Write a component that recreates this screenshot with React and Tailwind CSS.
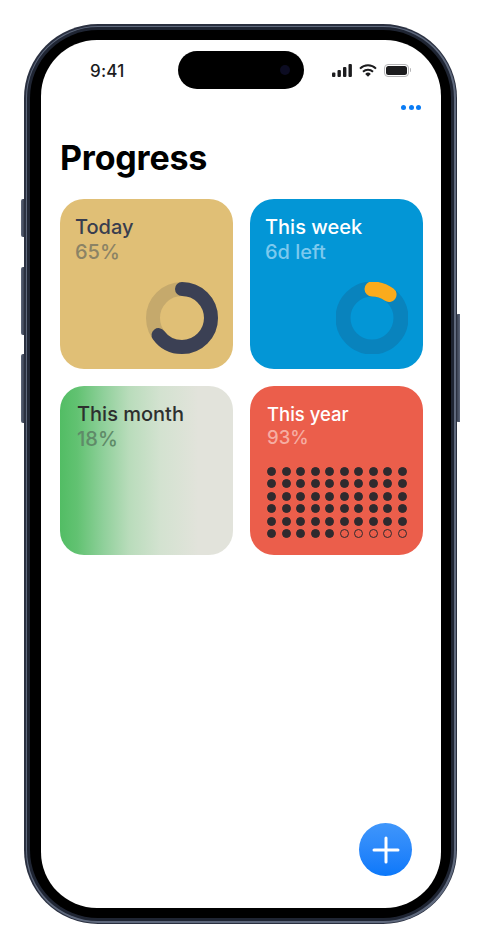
const font = { fontFamily: 'Inter, "Liberation Sans", sans-serif' };

function SideButton({ className }) {
  return <div className={`absolute w-[4px] bg-gradient-to-r from-[#5d667a] to-[#2e3545] ${className}`} />;
}

function StatusIcons() {
  return (
    <div className="flex items-center gap-[7px]">
      <svg width="20" height="13" viewBox="0 0 20 13" fill="#1c1c1e">
        <rect x="0" y="8.5" width="3.4" height="4.5" rx="1" />
        <rect x="5.5" y="6" width="3.4" height="7" rx="1" />
        <rect x="11" y="3" width="3.4" height="10" rx="1" />
        <rect x="16.5" y="0" width="3.4" height="13" rx="1" />
      </svg>
      <svg width="18" height="13" viewBox="0 0 18 13" fill="none" stroke="#1c1c1e" strokeWidth="2">
        <path d="M1 4.6 A11.5 11.5 0 0 1 17 4.6" />
        <path d="M4 7.7 A7.3 7.3 0 0 1 14 7.7" />
        <path d="M9 12.8 L6.2 9.9 A4 4 0 0 1 11.8 9.9 Z" fill="#1c1c1e" stroke="none" />
      </svg>
      <div className="flex items-center gap-[1px]">
        <div className="w-[25px] h-[13px] rounded-[4px] border border-[#b5b5b7] p-[1px]">
          <div className="w-full h-full rounded-[2.5px] bg-[#1c1c1e]" />
        </div>
        <div className="w-[1px] h-[4px] rounded-r-sm bg-[#b5b5b7]" />
      </div>
    </div>
  );
}

function Ring({ track, color, value, width = 14 }) {
  return (
    <svg width="72" height="72" viewBox="0 0 72 72" className="mt-auto self-end mr-[15px] mb-[15px]">
      <circle cx="36" cy="36" r="29" fill="none" stroke={track} strokeWidth={width} />
      <circle
        cx="36"
        cy="36"
        r="29"
        fill="none"
        stroke={color}
        strokeWidth={width}
        strokeLinecap="round"
        pathLength="100"
        strokeDasharray={`${value} 100`}
        transform="rotate(-90 36 36)"
      />
    </svg>
  );
}

function CardText({ title, sub, titleClass, subClass }) {
  return (
    <>
      <div className={`font-medium ${titleClass}`}>{title}</div>
      <div className={`font-medium ${subClass}`}>{sub}</div>
    </>
  );
}

function YearDots() {
  const dots = Array.from({ length: 60 }, (_, i) => i < 55);
  return (
    <div className="mt-auto grid grid-cols-[repeat(10,9px)] gap-x-[5.5px] gap-y-[3.5px]">
      {dots.map((filled, i) => (
        <div
          key={i}
          className={`w-[9px] h-[9px] rounded-full border border-[#2f2a2e] ${filled ? 'bg-[#2f2a2e]' : ''}`}
        />
      ))}
    </div>
  );
}

export default function App() {
  return (
    <div className="w-[482px] h-[948px] bg-white pt-[24px] pl-[24px] overflow-hidden" style={font}>
      <div className="relative w-[433px] h-[900px]">
        <SideButton className="-left-[3px] top-[175px] h-[38px] rounded-l-[2px]" />
        <SideButton className="-left-[3px] top-[243px] h-[68px] rounded-l-[2px]" />
        <SideButton className="-left-[3px] top-[330px] h-[69px] rounded-l-[2px]" />
        <SideButton className="-right-[3px] top-[290px] h-[108px] rounded-r-[2px] rotate-180" />

        <div className="relative w-full h-full rounded-[74px] bg-[#2a3040] p-[1.5px]">
          <div className="w-full h-full rounded-[72px] bg-[#5f697d] p-[1.5px]">
            <div className="w-full h-full rounded-[71px] bg-[#1f2533] p-[3px]">
              <div className="w-full h-full rounded-[68px] bg-black pt-[10px] pb-[9px] pl-[11px] pr-[10px]">
                <div className="relative w-[400px] h-[868px] rounded-[56px] bg-white overflow-hidden">
                  <div className="flex items-center justify-between h-[38px] mt-[11px] pl-[49px] pr-[30px]">
                    <span className="pt-[3px] text-[17px] font-medium text-[#1c1c1e] tracking-[0.2px]">9:41</span>
                    <div className="flex items-center justify-end h-[38px] ml-[54px] mr-auto pr-[14px] rounded-[19px] bg-black w-[126px]">
                      <div className="w-[10px] h-[10px] rounded-full bg-[#0c0c22]" />
                    </div>
                    <StatusIcons />
                  </div>

                  <div className="flex justify-end gap-[2.5px] pr-[20px] mt-[16px]">
                    <div className="w-[5px] h-[5px] rounded-full bg-[#0a7cf5]" />
                    <div className="w-[5px] h-[5px] rounded-full bg-[#0a7cf5]" />
                    <div className="w-[5px] h-[5px] rounded-full bg-[#0a7cf5]" />
                  </div>

                  <h1 className="ml-[19px] mt-[28px] text-[34px] leading-[40px] font-bold text-black tracking-[-0.2px]">Progress</h1>

                  <div className="grid grid-cols-[173px_173px] gap-x-[17px] gap-y-[17px] ml-[19px] mt-[21px]">
                    <div className="flex flex-col h-[170px] rounded-[24px] bg-[#e0bf76] pl-[15px] pt-[16px] text-[20px] leading-[25px]">
                      <CardText title="Today" sub="65%" titleClass="text-[#383d4e]" subClass="text-[#8b8365]" />
                      <Ring track="#c5a96c" color="#3b4054" value="65" />
                    </div>

                    <div className="flex flex-col h-[170px] rounded-[24px] bg-[#0396d6] pl-[15px] pt-[16px] text-[20px] leading-[25px]">
                      <CardText title="This week" sub="6d left" titleClass="text-white" subClass="text-[#7cc9ee]" />
                      <Ring track="#0983bd" color="#fbab1c" value="10" width="15" />
                    </div>

                    <div className="h-[169px] rounded-[24px] bg-[linear-gradient(90deg,#52bd64_0%,#62c272_10%,#8fd09a_25%,#b9dcbb_40%,#d3e2d0_58%,#e2e3db_80%)] pl-[17px] pt-[16px] text-[20px] leading-[25px]">
                      <CardText title="This month" sub="18%" titleClass="text-[#2d2f2e]" subClass="text-[#5f8a68]" />
                    </div>

                    <div className="flex flex-col h-[169px] rounded-[24px] bg-[#eb5e4b] pl-[17px] pt-[17px] pb-[17px] text-[18.5px] leading-[23px]">
                      <CardText title="This year" sub="93%" titleClass="text-white" subClass="text-[#f6ada2]" />
                      <YearDots />
                    </div>
                  </div>

                  <button className="absolute right-[29px] bottom-[32px] flex items-center justify-center w-[53px] h-[53px] rounded-full bg-gradient-to-b from-[#3f96fb] to-[#0a78fa]">
                    <svg width="28" height="28" viewBox="0 0 28 28" stroke="white" strokeWidth="3" strokeLinecap="round">
                      <path d="M14 2 V26 M2 14 H26" />
                    </svg>
                  </button>
                </div>
              </div>
            </div>
          </div>
        </div>
      </div>
    </div>
  );
}
